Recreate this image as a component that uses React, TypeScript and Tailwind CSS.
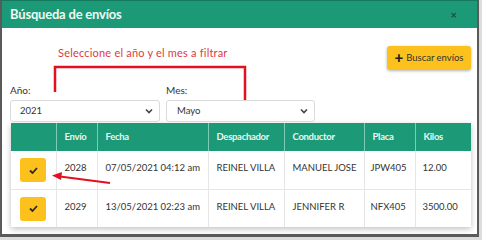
import React from "react";

const rows = [
  { id: "2028", fecha: "07/05/2021 04:12 am", desp: "REINEL VILLA", cond: "MANUEL JOSE", placa: "JPW405", kilos: "12.00" },
  { id: "2029", fecha: "13/05/2021 02:23 am", desp: "REINEL VILLA", cond: "JENNIFER R", placa: "NFX405", kilos: "3500.00" },
];

function Chevron() {
  return (
    <svg width="8" height="6" viewBox="0 0 8 6" className="text-[#444]">
      <path d="M1 1.5 L4 4.5 L7 1.5" fill="none" stroke="currentColor" strokeWidth="1.6" />
    </svg>
  );
}

function Check() {
  return (
    <svg width="9" height="7" viewBox="0 0 9 7">
      <path d="M1 3.5 L3.5 6 L8 1" fill="none" stroke="#2b2b2b" strokeWidth="1.8" />
    </svg>
  );
}

export default function App() {
  const font = { fontFamily: "Lato, 'Open Sans', sans-serif" };
  return (
    <div className="w-[482px] h-[240px] bg-[#dcdcdc] overflow-hidden" style={font}>
      <div className="relative w-[479px] h-[237px] bg-white border-l-2 border-r-2 border-b-[3px] border-[#5a5a5a] border-t border-t-[#137a5d] overflow-hidden">
        <div className="h-[27px] bg-[#1c9a78] flex items-center pl-[8px] pr-[20px]">
          <span className="text-[13px] font-bold text-[#eef8f4] tracking-[-0.2px]">Búsqueda de envíos</span>
          <span className="ml-auto text-[11px] font-bold text-[#1b4a3d] leading-none">×</span>
        </div>
        <div className="px-[8px]">
          <div className="flex h-[52px] pt-[18px]">
            <div className="ml-[48px] mt-[-1px] text-[11px] text-[#dc3b42] tracking-[0.2px]">Seleccione el año y el mes a filtrar</div>
            <button className="ml-auto mr-[-2px] h-[24px] w-[84px] rounded-[3px] bg-[#fcc11c] shadow-[0_1px_3px_rgba(0,0,0,0.3)] flex items-center justify-center gap-[3px] text-[9.5px] text-[#333]">
              <span className="text-[15px] font-black leading-none text-[#222] mt-[-1px]">+</span>
              <span>Buscar envíos</span>
            </button>
          </div>
          <div className="flex">
            <div className="w-[150px]">
              <div className="h-[20px] text-[10px] text-[#333] pt-[3px]">Año:</div>
              <div className="h-[22px] rounded-[3px] border border-[#dadada] flex items-center pl-[9px] pr-[6px] text-[9.5px] text-[#333]">
                <span>2021</span>
                <span className="ml-auto"><Chevron /></span>
              </div>
            </div>
            <div className="w-[149px] ml-[6px]">
              <div className="h-[20px] text-[10px] text-[#333] pt-[3px]">Mes:</div>
              <div className="h-[22px] rounded-[3px] border border-[#dadada] flex items-center pl-[10px] pr-[6px] text-[9.5px] text-[#333]">
                <span>Mayo</span>
                <span className="ml-auto"><Chevron /></span>
              </div>
            </div>
          </div>
          <div className="mt-[1px] ml-[1px] w-[460px] bg-white shadow-[0_2px_6px_rgba(0,0,0,0.25)]">
            <table className="w-[460px] table-fixed border-collapse text-[9.5px] text-[#333]">
              <colgroup>
                <col className="w-[45px]" />
                <col className="w-[41px]" />
                <col className="w-[111px]" />
                <col className="w-[76px]" />
                <col className="w-[80px]" />
                <col className="w-[51px]" />
                <col className="w-[56px]" />
              </colgroup>
              <thead>
                <tr className="h-[28px] bg-[#1c9a78] text-[#e9f6f1]">
                  <th className="border-r border-[#7fcab5]"></th>
                  <th className="border-r border-[#7fcab5] text-left pl-[8px] font-bold tracking-[-0.3px]">Envío</th>
                  <th className="border-r border-[#7fcab5] text-left pl-[8px] font-bold tracking-[-0.3px]">Fecha</th>
                  <th className="border-r border-[#7fcab5] text-left pl-[8px] font-bold tracking-[-0.3px]">Despachador</th>
                  <th className="border-r border-[#7fcab5] text-left pl-[8px] font-bold tracking-[-0.3px]">Conductor</th>
                  <th className="border-r border-[#7fcab5] text-left pl-[8px] font-bold tracking-[-0.3px]">Placa</th>
                  <th className="text-left pl-[8px] font-bold tracking-[-0.3px]">Kilos</th>
                </tr>
              </thead>
              <tbody>
                {rows.map((r, i) => (
                  <tr key={r.id} className={"h-[38px] " + (i === 0 ? "border-b border-[#e6e6e6]" : "")}>
                    <td className="border-r border-[#e6e6e6] align-top pt-[7px] pl-[9px]">
                      <div className="w-[26px] h-[24px] rounded-[3px] bg-[#fcc11c] flex items-center justify-center">
                        <Check />
                      </div>
                    </td>
                    <td className="border-r border-[#e6e6e6] align-top pt-[10px] pl-[8px]">{r.id}</td>
                    <td className="border-r border-[#e6e6e6] align-top pt-[10px] pl-[8px]">{r.fecha}</td>
                    <td className="border-r border-[#e6e6e6] align-top pt-[10px] pl-[8px]">{r.desp}</td>
                    <td className="border-r border-[#e6e6e6] align-top pt-[10px] pl-[8px]">{r.cond}</td>
                    <td className="border-r border-[#e6e6e6] align-top pt-[10px] pl-[6px]">{r.placa}</td>
                    <td className="align-top pt-[10px] pl-[7px]">{r.kilos}</td>
                  </tr>
                ))}
              </tbody>
            </table>
          </div>
        </div>
        <svg className="absolute left-0 top-0 pointer-events-none" width="482" height="240" viewBox="-2 -1 482 240">
          <polyline points="51,90 51,65 241,65 241,98" fill="none" stroke="#e3101f" strokeWidth="2.5" />
          <line x1="106" y1="181" x2="56" y2="174.5" stroke="#e3101f" strokeWidth="2" />
          <polygon points="48,173.5 58,170 57,178" fill="#e3101f" />
        </svg>
      </div>
    </div>
  );
}
